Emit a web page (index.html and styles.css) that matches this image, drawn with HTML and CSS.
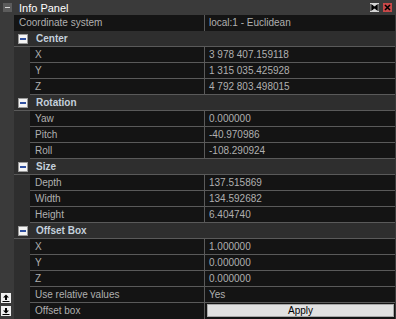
FILE: index.html
```html
<!DOCTYPE html>
<html lang="en">
<head>
    <meta charset="UTF-8">
    <title>Info Panel</title>
    <link rel="stylesheet" href="styles.css">
</head>
<body class="body">
<div class="panel">
    <div class="titlebar">
        <span class="tsq"><span class="tbar"></span></span>
        <span class="title">Info Panel</span>
        <span class="tbtns">
            <svg class="tbtn dock" width="9" height="9" viewBox="0 0 9 9">
                <rect width="9" height="9" fill="#d4d4d4"/>
                <path d="M1 1v7M8 1v7M2 2l3 2.5L2 7zM7 2L4 4.5L7 7z" stroke="#000" stroke-width="1" fill="#000"/>
            </svg>
            <svg class="tbtn close" width="9" height="9" viewBox="0 0 9 9">
                <rect width="9" height="9" fill="#c84848"/>
                <path d="M2 2l5 5M7 2l-5 5" stroke="#000" stroke-width="1.6"/>
            </svg>
        </span>
    </div>
    <div class="main">
        <div class="side">
            <svg class="sico" width="10" height="10" viewBox="0 0 10 10">
                <rect width="10" height="10" fill="#f0f0f0"/>
                <path d="M5 1.5L2 4.5h2v2.5h2V4.5h2z" fill="#000"/>
                <rect x="1.5" y="8" width="7" height="1" fill="#000"/>
            </svg>
            <svg class="sico" width="10" height="10" viewBox="0 0 10 10">
                <rect width="10" height="10" fill="#f0f0f0"/>
                <path d="M5 7.5L2 4.5h2V2h2v2.5h2z" fill="#000"/>
                <rect x="1.5" y="8" width="7" height="1" fill="#000"/>
            </svg>
        </div>
        <div class="grid">
            <div class="row top">
                <div class="lab">Coordinate system</div>
                <div class="val">local:1 - Euclidean</div>
            </div>

            <div class="grp"><span class="gsq"><span class="gbar"></span></span>Center</div>
            <div class="row"><div class="lab">X</div><div class="val">3 978 407.159118</div></div>
            <div class="row"><div class="lab">Y</div><div class="val">1 315 035.425928</div></div>
            <div class="row"><div class="lab">Z</div><div class="val">4 792 803.498015</div></div>

            <div class="grp"><span class="gsq"><span class="gbar"></span></span>Rotation</div>
            <div class="row"><div class="lab">Yaw</div><div class="val">0.000000</div></div>
            <div class="row"><div class="lab">Pitch</div><div class="val">-40.970986</div></div>
            <div class="row"><div class="lab">Roll</div><div class="val">-108.290924</div></div>

            <div class="grp"><span class="gsq"><span class="gbar"></span></span>Size</div>
            <div class="row"><div class="lab">Depth</div><div class="val">137.515869</div></div>
            <div class="row"><div class="lab">Width</div><div class="val">134.592682</div></div>
            <div class="row"><div class="lab">Height</div><div class="val">6.404740</div></div>

            <div class="grp"><span class="gsq"><span class="gbar"></span></span>Offset Box</div>
            <div class="row"><div class="lab">X</div><div class="val">1.000000</div></div>
            <div class="row"><div class="lab">Y</div><div class="val">0.000000</div></div>
            <div class="row"><div class="lab">Z</div><div class="val">0.000000</div></div>
            <div class="row"><div class="lab">Use relative values</div><div class="val">Yes</div></div>
            <div class="row last"><div class="lab">Offset box</div><div class="val btncell"><button class="apply">Apply</button></div></div>
        </div>
    </div>
</div>
</body>
</html>
```

FILE: styles.css
```css
.body{
    margin: 0;
    background-color: #3a3a3a;
    font-family: "Liberation Sans", Arial, sans-serif;
    font-size: 10px;
}
.panel{
    width: 396px;
    height: 319px;
    display: flex;
    flex-direction: column;
    background-color: #3a3a3a;
    overflow: hidden;
}
.titlebar{
    height: 15px;
    display: flex;
    align-items: center;
    color: #ffffff;
    font-size: 11px;
}
.tsq{
    width: 9px;
    height: 9px;
    margin-left: 3px;
    background-color: #5c5c5c;
    display: flex;
    align-items: center;
    justify-content: center;
}
.tbar{
    width: 5px;
    height: 1px;
    background-color: #d8d8d8;
}
.title{
    margin-left: 7px;
    flex: 1;
}
.tbtns{
    display: flex;
    gap: 4px;
    margin-right: 4px;
}
.tbtn{
    display: block;
}
.main{
    flex: 1;
    display: flex;
}
.side{
    width: 14px;
    display: flex;
    flex-direction: column;
    justify-content: flex-end;
    align-items: center;
    gap: 3px;
    padding-bottom: 3px;
}
.sico{
    display: block;
    margin-left: -2px;
}
.grid{
    flex: 1;
    margin-right: 1px;
    display: flex;
    flex-direction: column;
    background-color: #2e2e2e;
}
.row{
    height: 15px;
    border-bottom: 1px solid #5a5a5a;
    margin-left: 16px;
    display: flex;
    background-color: #141414;
    color: #b0b0b0;
    line-height: 15px;
}
.row.top{
    margin-left: 0;
    height: 16px;
    border-bottom: none;
}
.row.top .lab{
    width: 185px;
}
.lab{
    width: 169px;
    padding-left: 5px;
    border-right: 1px solid #5a5a5a;
    white-space: nowrap;
}
.val{
    flex: 1;
    padding-left: 4px;
    white-space: nowrap;
}
.grp{
    height: 15px;
    border-bottom: 1px solid #5a5a5a;
    display: flex;
    align-items: center;
    color: #c4d0dc;
    font-weight: bold;
    background-color: #2e2e2e;
}
.gsq{
    width: 8px;
    height: 8px;
    margin-left: 4px;
    margin-right: 8px;
    border: 1px solid #9a9a9a;
    background-color: #f4f4f4;
    display: flex;
    align-items: center;
    justify-content: center;
}
.gbar{
    width: 6px;
    height: 2px;
    background-color: #3050a0;
}
.row.last{
    border-bottom: none;
    height: 16px;
}
.btncell{
    padding: 1px 1px 2px 2px;
}
.apply{
    width: 100%;
    height: 13px;
    padding: 0;
    border: 1px solid #a8a8a8;
    background-color: #e1e1e1;
    font-family: "Liberation Sans", Arial, sans-serif;
    font-size: 10px;
    line-height: 11px;
    color: #000;
    display: block;
}
```
